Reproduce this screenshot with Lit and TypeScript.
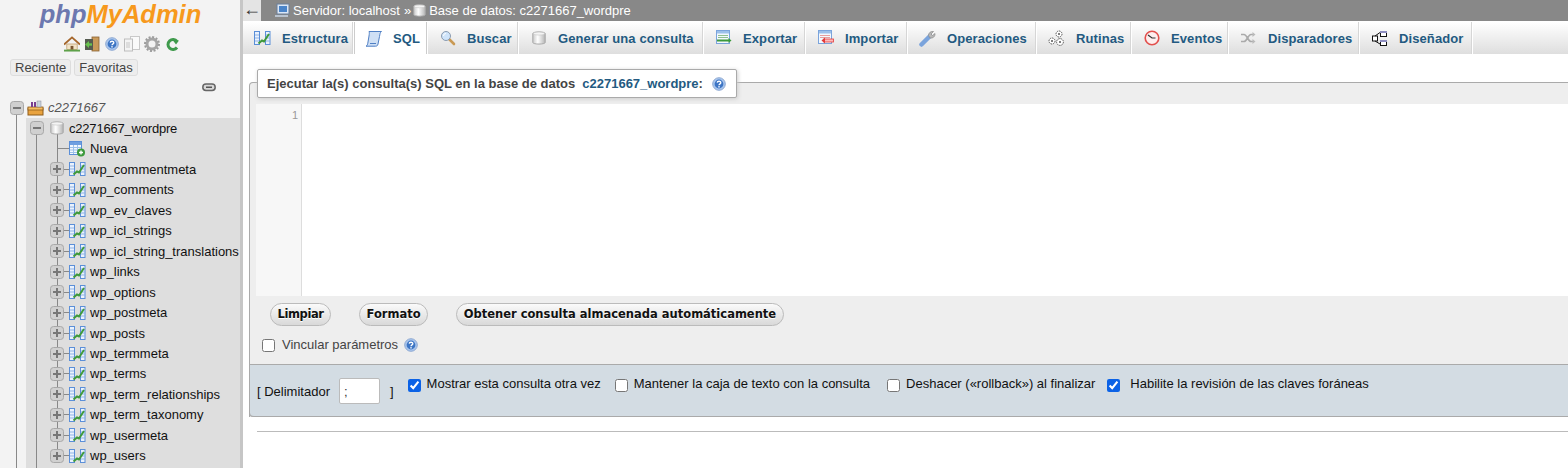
import { LitElement, html, css, TemplateResult } from "lit";
import { customElement } from "lit/decorators.js";

const dbIcon = (s = 14) => html`<svg width=${s} height=${s} viewBox="0 0 14 14"><defs><linearGradient id="dbg" x1="0" x2="1"><stop offset="0" stop-color="#c9c9c9"/><stop offset=".4" stop-color="#fff"/><stop offset="1" stop-color="#b5b5b5"/></linearGradient></defs><path d="M.8 2.500C.8 .4 13.200 .4 13.200 2.500V11.500C13.200 13.600 .8 13.600 .8 11.500Z" fill="url(#dbg)" stroke="#a9a9a9"/><ellipse cx="7" cy="2.600" rx="5.600" ry="1.500" fill="#f4f4f4" stroke="#bbb" stroke-width=".5"/></svg>`;

const tableCheck = html`<svg width="17" height="16" viewBox="0 0 17 16"><rect x=".5" y="1.500" width="5" height="13" fill="#eaf2fd" stroke="#5b8fd8"/><rect x="11.500" y="1.500" width="4.500" height="13" fill="#eaf2fd" stroke="#5b8fd8"/><path d="M1 5h4M1 8h4M1 11h4M12 5h4M12 8h4M12 11h4" stroke="#8fb3e6"/><path d="M4.500 13.500 8 10.500 10 11.500 15 4" fill="none" stroke="#3f9a3c" stroke-width="2"/></svg>`;

const tableNew = html`<svg width="17" height="16" viewBox="0 0 17 16"><rect x=".5" y=".5" width="12" height="13" fill="#f3f8fe" stroke="#5b8fd8"/><rect x="1" y="1" width="11" height="3" fill="#6f9fe0"/><path d="M1 6.500h11M1 9h11M1 11.500h11M4.500 4v9M8.500 4v9" stroke="#9cc0ea"/><circle cx="12" cy="11.500" r="4" fill="#3c9a3c"/><path d="M10 11.500h4M12 9.500v4" stroke="#fff" stroke-width="1.400"/></svg>`;

const tabIcons: Record<string, TemplateResult> = {
  struct: html`<svg width="17" height="16" viewBox="0 0 17 16"><rect x=".5" y="1.500" width="5" height="13" fill="#eaf2fd" stroke="#5b8fd8"/><rect x="11.500" y="1.500" width="4.500" height="13" fill="#eaf2fd" stroke="#5b8fd8"/><path d="M1 5h4M1 8h4M1 11h4M12 5h4M12 8h4M12 11h4" stroke="#8fb3e6"/><path d="M4.500 13.500 8 10.500 10 11.500 15 4" fill="none" stroke="#3f9a3c" stroke-width="2"/></svg>`,
  sql: html`<svg width="17" height="17" viewBox="0 0 17 17"><path d="M4 1.500h12.500c-1.500 1-1.500 2.500-2 5l-1.500 7.500c-.3 1.500-1 2.200-2.500 2.200H1c1.300-.7 1.500-1.500 1.800-3L4 6C4.300 4 4.500 2.500 4 1.500Z" fill="#cfe0f5" stroke="#4f7fc4"/><path d="M5 13.500h6" stroke="#4f7fc4"/></svg>`,
  search: html`<svg width="16" height="16" viewBox="0 0 16 16"><path d="M9 9l5 5" stroke="#c99a55" stroke-width="2.600" stroke-linecap="round"/><circle cx="6" cy="6" r="4.500" fill="#cfe4fa" stroke="#8a9bb0"/><path d="M3.500 6a2.500 2.500 0 0 1 2.500-2.500" stroke="#fff" fill="none"/></svg>`,
  query: dbIcon(14),
  export: html`<svg width="16" height="16" viewBox="0 0 16 16"><rect x=".5" y=".5" width="13" height="13" fill="#f3f8fe" stroke="#7ba4dc"/><rect x="1" y="1" width="12" height="2.500" fill="#9cc0ea"/><path d="M2 5.500h10M2 7.500h10" stroke="#8fc08f"/><path d="M1 10.500h12" stroke="#3c9a3c" stroke-width="2"/><path d="M12.500 8l3 2.500-3 2.500Z" fill="#3c9a3c"/></svg>`,
  import: html`<svg width="16" height="16" viewBox="0 0 16 16"><rect x=".5" y=".5" width="13" height="13" fill="#f3f8fe" stroke="#7ba4dc"/><rect x="1" y="1" width="12" height="2.500" fill="#9cc0ea"/><path d="M2 5.500h10M2 7.500h10" stroke="#e6a0a0"/><rect x="6" y="9" width="9.500" height="3" fill="#fbb" stroke="#e23a3a" stroke-width=".8"/><path d="M7 7.500l-3.500 3 3.500 3Z" fill="#e23a3a"/></svg>`,
  ops: html`<svg width="17" height="17" viewBox="0 0 17 17"><path d="M2.500 14.500 11 6" stroke="#7ba4dc" stroke-width="4.500" stroke-linecap="round"/><path d="M9.500 5.500c0-2.500 2-4.500 5-4l-2.500 2.500 1.500 1.500 2.500-2c.3 3-2 5-5 4.500Z" fill="#b9b9b9" stroke="#8a8a8a" stroke-width=".7"/></svg>`,
  routines: html`<svg width="17" height="16" viewBox="0 0 17 16"><g fill="#fff" stroke="#555" stroke-width="1" stroke-dasharray="1.500 .8"><circle cx="11" cy="4" r="3"/><circle cx="12" cy="12" r="3.400"/><circle cx="4" cy="11" r="3"/></g><circle cx="11" cy="4" r="1" fill="#555"/><circle cx="12" cy="12" r="1" fill="#555"/><circle cx="4" cy="11" r="1" fill="#555"/></svg>`,
  events: html`<svg width="16" height="16" viewBox="0 0 16 16"><circle cx="8" cy="8" r="6.800" fill="#fdeeee" stroke="#e2504d" stroke-width="1.600"/><path d="M4 5l4 3h3.500" fill="none" stroke="#333" stroke-width="1.200"/></svg>`,
  triggers: html`<svg width="15" height="12" viewBox="0 0 15 12"><path d="M0 2.500h3c3 0 4 7 7 7h2M0 9.500h3c3 0 4-7 7-7h2" fill="none" stroke="#aaa" stroke-width="1.600"/><path d="M11.500 0l3 2.500-3 2.500ZM11.500 7l3 2.500-3 2.500Z" fill="#bbb"/></svg>`,
  designer: html`<svg width="15" height="15" viewBox="0 0 15 15"><rect x="8.500" y=".5" width="6" height="5" fill="#fff" stroke="#111"/><rect x="8" y="0" width="7" height="2" fill="#8d8dc0"/><rect x="8.500" y="9.500" width="6" height="5" fill="#fff" stroke="#111"/><rect x="8" y="9" width="7" height="2" fill="#8d8dc0"/><rect x=".5" y="5" width="5" height="5" fill="#fff" stroke="#111"/><path d="M3 5 8 1.500M3 10l5 3" stroke="#111" fill="none"/></svg>`,
};

const tabs: [string, string, number][] = [
  ["struct", "Estructura", 111], ["sql", "SQL", 74], ["search", "Buscar", 91], ["query", "Generar una consulta", 185],
  ["export", "Exportar", 102], ["import", "Importar", 102], ["ops", "Operaciones", 129], ["routines", "Rutinas", 95],
  ["events", "Eventos", 97], ["triggers", "Disparadores", 131], ["designer", "Diseñador", 113],
];

const tables = [
  "wp_commentmeta", "wp_comments", "wp_ev_claves", "wp_icl_strings", "wp_icl_string_translations",
  "wp_links", "wp_options", "wp_postmeta", "wp_posts", "wp_termmeta", "wp_terms",
  "wp_term_relationships", "wp_term_taxonomy", "wp_usermeta", "wp_users",
];

const help = html`<svg class="help" width="14" height="14" viewBox="0 0 14 14"><circle cx="7" cy="7" r="6.300" fill="#a9c6ee" stroke="#8fa9d2"/><circle cx="7" cy="7" r="4.400" fill="#3d75c4"/><path d="M5.200 5.600C5.300 3.800 8.900 3.800 8.800 5.700 8.800 6.900 7 6.900 7 8.300" fill="none" stroke="#fff" stroke-width="1.300"/><rect x="6.300" y="9.100" width="1.400" height="1.400" fill="#fff"/></svg>`;

const navIcons = html`
  <svg width="16" height="16" viewBox="0 0 17 16"><path d="M0 8.500 8.500 1 17 8.500" fill="none" stroke="#a5662b" stroke-width="2"/><rect x="3" y="8" width="11" height="6" fill="#f1e3c8" stroke="#b8905a" stroke-width=".7"/><rect x="7" y="10" width="3" height="4" fill="#7a5530"/><rect x="0" y="14" width="17" height="2" fill="#5ea14a"/></svg>
  <svg width="16" height="16" viewBox="0 0 16 16"><rect x="8" y="1" width="7" height="14" fill="#c99a5b" stroke="#8a6231" stroke-width=".8"/><rect x="1" y="3" width="8" height="11" fill="#555b50"/><path d="M8 8.500H3" stroke="#68c24e" stroke-width="2.400"/><path d="M5 5 1 8.500 5 12Z" fill="#68c24e"/></svg>
  ${help}
  <svg width="16" height="16" viewBox="0 0 16 16"><rect x="6.500" y=".5" width="9" height="13" fill="#fafafa" stroke="#c9c9c9"/><rect x=".5" y="3" width="8" height="12" fill="#f4f4f4" stroke="#bdbdbd"/><path d="M3 6v6M5 6v6" stroke="#c6c6c6"/></svg>
  <svg width="16" height="16" viewBox="0 0 16 16"><circle cx="8" cy="8" r="5" fill="none" stroke="#a6a6a6" stroke-width="3"/><circle cx="8" cy="8" r="7" fill="none" stroke="#9c9c9c" stroke-width="2" stroke-dasharray="2 1.660"/></svg>
  <svg width="13" height="15" viewBox="0 0 13 15"><path d="M11 4.500A5 5 0 1 0 11 10.500" fill="none" stroke="#3f9a4c" stroke-width="3"/><path d="M7 3.500h6l-3 4Z" fill="#3f9a4c"/></svg>`;

@customElement("app-root")
export class AppRoot extends LitElement {
  static styles = css`
    :host { display: block; width: 1568px; height: 468px; overflow: hidden; background: #fff;
      font-family: "Liberation Sans", Arial, sans-serif; font-size: 13px; color: #444; }
    .page { display: grid; grid-template-columns: 240px 3px 1fr; height: 468px; overflow: hidden; }

    /* sidebar */
    .side { background: #f3f3f3; color: #111; overflow: hidden; position: relative; }
    .divider { background: #c6c6c6; }
    .logo { margin: 0; height: 34px; text-align: center; font: italic bold 25.500px/28px "Liberation Sans", sans-serif; color: #f7991c; padding-left: 1px; }
    .logo span { color: #6c78af; }
    .navicons { display: flex; align-items: center; gap: 4px; height: 20px; margin: 0 0 0 64px; }
    .navicons svg:nth-child(3) { margin: 0 1px; }
    .navicons svg:nth-child(6) { margin-left: 2px; }
    .sidetabs { display: flex; gap: 3px; margin: 5px 0 0 10px; }
    .sidetab { font-size: 13px; line-height: 15px; padding: 0 4px; border: 1px solid #ddd; border-radius: 3px; background: #ededed; color: #444; }
    .linkrow { display: flex; justify-content: flex-end; height: 9px; margin: 7px 24px 0 0; }

    .tree { position: relative; margin-top: 6px; }
    .tree::before { content: ""; position: absolute; left: 16px; top: 10px; width: 1px; background: #888; height: 400px; }
    .rootrow { display: flex; align-items: center; height: 20px; padding-left: 10px; position: relative; font-style: italic; color: #555; font-size: 13px; }
    .rootrow .box { margin-right: 3px; }
    .rootrow .label { margin: -2px 0 0 4px; }
    .db { position: relative; margin-left: 26px; background: #dedede; height: 352px; }
    .db::before { content: ""; position: absolute; left: 10px; top: 15px; height: 340px; width: 1px; background: #888; }
    .db::after { content: ""; position: absolute; left: 31px; top: 15px; height: 325px; width: 1px; background: #888; }
    .row { position: relative; z-index: 1; height: 20.470px; display: flex; align-items: center; padding-left: 24px; font-size: 13px; white-space: nowrap; }
    .row.dbrow { padding-left: 4px; height: 20.600px; letter-spacing: -.2px; }
    .row .box { flex: none; }
    .row .hline { width: 5px; height: 1px; background: #888; flex: none; }
    .row .ic { flex: none; display: flex; margin-right: 4px; }
    .row.dbrow .ic { margin: 0 5px 0 6px; }
    .nueva { padding-left: 31px; }
    .nueva .hline { width: 12px; }

    /* main */
    .main { display: flex; flex-direction: column; min-width: 0; overflow: hidden; }
    .top { display: flex; align-items: center; height: 21px; background: #888; color: #fff; font-size: 13px; margin-bottom: 1px; }
    .back { width: 18px; height: 21px; background: #e4e4e4; color: #333; font-size: 18px; line-height: 19px; text-align: center; margin-right: 13px; }
    .top svg { margin-right: 3px; }
    .top .sep { margin: 0 2px 0 4px; }
    .tabs { display: flex; height: 32px; background: linear-gradient(#fff, #dedede); }
    .tab { display: flex; align-items: center; box-sizing: border-box; padding-left: 11px; border-right: 1px solid #fff; color: #235a81; font-weight: bold; font-size: 13px; letter-spacing: .1px; white-space: nowrap; box-shadow: inset -1px 0 0 #d6d6d6; }
    .tab .tabic { display: flex; width: 17px; justify-content: center; margin-right: 11px; }
    .tab.on { background: #fff; box-shadow: inset 1px 0 0 #ccc, inset -1px 0 0 #ccc; }

    .content { padding: 28px 0 0 6px; }
    .fs { position: relative; margin-right: -10px; border: 1px solid #aaa; border-bottom: 0; border-radius: 4px 0 0 0; background: #eee; }
    .legend { position: absolute; left: 7px; top: -14px; display: flex; align-items: center; height: 27px; padding: 0 10px 0 9px; background: #fff; border: 1px solid #aaa; border-radius: 2px; box-shadow: 1px 1px 4px #ccc; font-weight: bold; font-size: 13px; color: #444; white-space: nowrap; }
    .legend a { color: #235a81; margin-left: 7px; }
    .legend .help { margin-left: 9px; }
    .editor { display: flex; height: 192px; margin: 21px 0 0 6px; background: #fff; }
    .gutter { background: #f7f7f7; border-right: 1px solid #ddd; color: #999; font-size: 11px; text-align: right; padding: 5px 3px 0 0; box-sizing: border-box; width: 46px; }
    .btns { display: flex; gap: 28px; padding: 7px 0 0 20px; }
    .btn { height: 23px; box-sizing: border-box; padding: 0 6.500px; border: 1px solid #bbb; border-radius: 12px; background: linear-gradient(#fafafa, #d9d9d9); font: bold 11.500px/21px "DejaVu Sans", sans-serif; color: #111; text-shadow: 0 1px 0 #fff; white-space: nowrap; }
    .btn.tight { letter-spacing: -.4px; }
    .bind { display: flex; align-items: center; gap: 6px; height: 20px; margin: 9px 0 0 12px; padding-bottom: 8px; font-size: 13px; color: #444; }
    .bind .txt { margin: 0 0 2px 1px; }
    input[type=checkbox] { margin: 0; width: 13px; height: 13px; accent-color: #0b62e6; flex: none; }
    .foot { display: flex; align-items: flex-start; height: 53px; box-sizing: border-box; background: #d3dce3; border: 1px solid #aaa; border-width: 1px 0 1px 0; border-radius: 0 0 0 4px; padding: 12px 0 0 7px; color: #111; font-size: 13px; box-shadow: -1px 0 0 #aaa; white-space: nowrap; margin-top: 1px; }
    .delim { display: flex; align-items: center; height: 28px; }
    .delim input { width: 41px; height: 26px; box-sizing: border-box; margin: 0 10px 0 9px; border: 1px solid #bbb; border-radius: 2px; background: #fff; padding: 0 4px; font-size: 13px; font-family: inherit; color: #333; }
    .opt { display: flex; align-items: center; gap: 6px; height: 14px; margin: -1px 0 0 14px; }
    .opt input[type=checkbox] { margin-top: 4px; }
    .opt.m2 { margin-left: 14px; }
    .opt.m3 { margin-left: 17px; }
    .opt.m4 { margin-left: 12px; gap: 10px; }
    hr { border: 0; height: 1px; background: #bbb; margin: 14px 0 0 8px; }
  `;

  box(plus: boolean) {
    return html`<svg class="box" width="14" height="14" viewBox="0 0 14 14"><rect x=".5" y=".5" width="13" height="13" rx="3" fill="#d0d0d0" stroke="#a8a8a8"/><path d=${plus ? "M3 7h8M7 3v8" : "M3 7h8"} stroke="#777" stroke-width="2"/></svg>`;
  }

  render() {
    return html`<div class="page">
      <aside class="side">
        <h1 class="logo"><span>php</span>MyAdmin</h1>
        <div class="navicons">${navIcons}</div>
        <div class="sidetabs"><span class="sidetab">Reciente</span><span class="sidetab">Favoritas</span></div>
        <div class="linkrow"><svg width="14" height="9" viewBox="0 0 14 9"><rect x=".8" y="1" width="12.400" height="6.500" rx="3.200" fill="#d8d8d8" stroke="#666" stroke-width="1.500"/><path d="M4 4.250h6" stroke="#555" stroke-width="1.500"/></svg></div>
        <div class="tree">
          <div class="rootrow">${this.box(false)}
            <svg width="17" height="16" viewBox="0 0 17 16"><rect x="1" y="8" width="15" height="7" fill="#e9a33f" stroke="#8f5c1b"/><rect x="1" y="7" width="15" height="3" fill="#f5bd62" stroke="#8f5c1b" stroke-width=".8"/><rect x="4" y="2" width="2" height="5" fill="#7a3f8f"/><rect x="7" y="2" width="2" height="5" fill="#7a3f8f"/><rect x="10" y="1" width="4" height="6" fill="#c9d3dc" stroke="#889" stroke-width=".5"/></svg>
            <span class="label">c2271667</span></div>
          <div class="db">
            <div class="row dbrow">${this.box(false)}<span class="ic">${dbIcon(14)}</span>c2271667_wordpre</div>
            <div class="row nueva"><span class="hline"></span><span class="ic">${tableNew}</span>Nueva</div>
            ${tables.map((t) => html`<div class="row">${this.box(true)}<span class="hline"></span><span class="ic">${tableCheck}</span>${t}</div>`)}
          </div>
        </div>
      </aside>
      <div class="divider"></div>
      <main class="main">
        <div class="top"><span class="back">←</span>
          <svg width="16" height="15" viewBox="0 0 16 15"><rect x="3" y="1" width="12" height="10" fill="#dbe6f5" stroke="#6b7f99"/><rect x="5" y="3" width="8" height="6" fill="#4a84c9"/><rect x="1" y="12" width="13" height="2" fill="#b9c3cf"/></svg>
          <span>Servidor: localhost</span><span class="sep">»</span>${dbIcon(13)}<span>Base de datos: c2271667_wordpre</span></div>
        <nav class="tabs">${tabs.map(([i, t, w]) => html`<div class="tab ${t === "SQL" ? "on" : ""}" style="width:${w}px"><span class="tabic">${tabIcons[i]}</span>${t}</div>`)}</nav>
        <section class="content">
          <div class="fs">
            <div class="legend">Ejecutar la(s) consulta(s) SQL en la base de datos <a>c2271667_wordpre</a>:${help}</div>
            <div class="editor"><div class="gutter">1</div></div>
            <div class="btns"><span class="btn tight">Limpiar</span><span class="btn">Formato</span><span class="btn">Obtener consulta almacenada automáticamente</span></div>
            <label class="bind"><input type="checkbox" /><span class="txt">Vincular parámetros</span> ${help}</label>
            <div class="foot">
              <div class="delim">[ Delimitador<input value=";" />]</div>
              <label class="opt"><input type="checkbox" checked />Mostrar esta consulta otra vez</label>
              <label class="opt m2"><input type="checkbox" />Mantener la caja de texto con la consulta</label>
              <label class="opt m3"><input type="checkbox" />Deshacer («rollback») al finalizar</label>
              <label class="opt m4"><input type="checkbox" checked />Habilite la revisión de las claves foráneas</label>
            </div>
          </div>
          <hr />
        </section>
      </main>
    </div>`;
  }
}
